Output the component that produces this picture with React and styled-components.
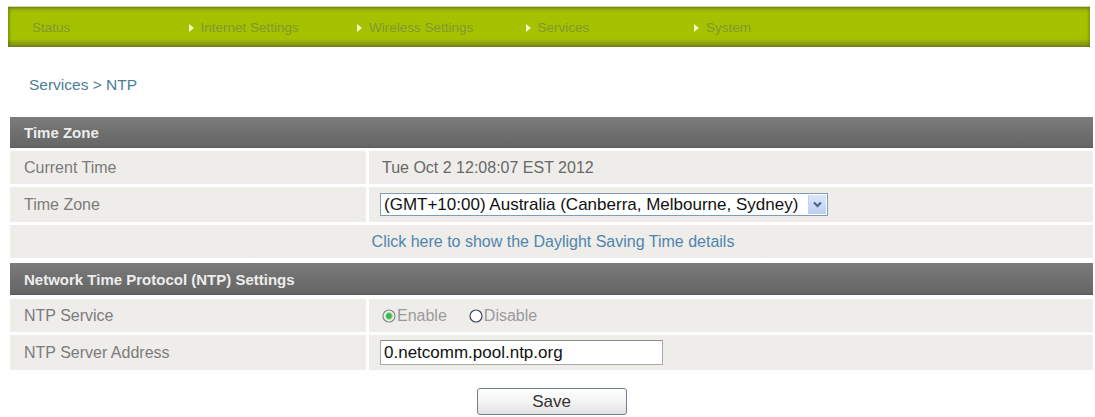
import React from 'react';
import styled, { createGlobalStyle } from 'styled-components';

const GlobalStyle = createGlobalStyle`
  body {
    margin: 0;
    background: #ffffff;
    font-family: "Liberation Sans", Arial, sans-serif;
  }
`;

const Page = styled.div`
  padding: 6px 5px 0 8px;
  width: 1095px;
  height: 417px;
  box-sizing: border-box;
  overflow: hidden;
`;

const NavBar = styled.nav`
  display: flex;
  align-items: center;
  height: 41px;
  width: 1082px;
  box-sizing: border-box;
  padding-left: 12px;
  border-top: 1px solid #d3d8a8;
  background: linear-gradient(
    to bottom,
    #7f8c26 0,
    #9bb408 3px,
    #a5c200 6px,
    #a5c200 calc(100% - 8px),
    #93a80e calc(100% - 5px),
    #76861c 100%
  );
  box-shadow: inset 2px 0 2px rgba(90, 100, 20, 0.45),
    inset -2px 0 2px rgba(90, 100, 20, 0.35);
`;

const NavItem = styled.div`
  display: flex;
  align-items: center;
  width: 168.5px;
  flex: 0 0 168.5px;
  font-size: 13.5px;
  color: #83982e;
  padding-top: 1px;
`;

const Arrow = styled.span`
  width: 0;
  height: 0;
  margin-right: 7px;
  border-top: 4px solid transparent;
  border-bottom: 4px solid transparent;
  border-left: 5px solid ${(p) => (p.$hidden ? 'transparent' : '#f2f6c4')};
`;

const Crumb = styled.div`
  padding: 29px 0 0 21px;
  height: 70px;
  box-sizing: border-box;
  font-size: 15.5px;
  color: #4b7d97;
`;

const Table = styled.div`
  display: flex;
  flex-direction: column;
  gap: 3px;
  margin-left: 2px;
  width: 1083px;
`;

const Header = styled.div`
  height: ${(p) => p.$h || 31}px;
  margin-top: ${(p) => p.$top || 0}px;
  margin-bottom: ${(p) => p.$bottom || 0}px;
  display: flex;
  align-items: center;
  padding-left: 14px;
  font-size: 15px;
  font-weight: bold;
  color: #ececec;
  background: linear-gradient(to bottom, #7c7c7c 0, #717171 40%, #676767 92%, #5c5c5c 100%);
`;

const Row = styled.div`
  display: grid;
  grid-template-columns: 356px 1fr;
  column-gap: 3px;
  height: ${(p) => p.$h || 33}px;
`;

const Cell = styled.div`
  display: flex;
  align-items: center;
  background: #efedea;
  font-size: 16px;
  color: ${(p) => (p.$label ? '#7b7b7b' : '#676767')};
  padding-left: ${(p) => (p.$label ? 14 : p.$input ? 11 : 13)}px;
`;

const WideCell = styled.div`
  grid-column: 1 / span 2;
  display: flex;
  align-items: center;
  justify-content: center;
  background: #efedea;
  font-size: 16px;
  color: #4f85ad;
  padding-left: 3px;
`;

const SelectBox = styled.div`
  display: flex;
  align-items: center;
  height: 23px;
  box-sizing: border-box;
  border: 1px solid #7f9db9;
  background: #ffffff;
  font-size: 17px;
  color: #111111;
  padding-left: 3px;
`;

const SelectArrow = styled.div`
  width: 17px;
  height: 19px;
  margin: 0 1px 0 10px;
  display: flex;
  align-items: center;
  justify-content: center;
  background: linear-gradient(to bottom, #dbe6fa, #bccff1);
  border-left: 1px solid #c6d4ef;
`;

const TextInput = styled.div`
  display: flex;
  align-items: center;
  width: 283px;
  height: 25px;
  box-sizing: border-box;
  border: 1px solid #a9a9a9;
  border-top-color: #8e8e8e;
  background: #ffffff;
  padding-left: 3px;
  font-size: 17px;
  color: #111111;
`;

const RadioGroup = styled.div`
  display: flex;
  align-items: center;
  color: #9a9a9a;
  font-size: 16px;
`;

const RadioLabel = styled.span`
  margin-left: 1px;
  margin-right: ${(p) => p.$gap || 0}px;
`;

const Actions = styled.div`
  display: flex;
  justify-content: center;
  width: 1083px;
  margin-left: 2px;
  padding-top: 18px;
`;

const SaveButton = styled.button`
  width: 150px;
  height: 27px;
  border: 1px solid #6f8090;
  border-radius: 3px;
  background: linear-gradient(to bottom, #fefefe 0, #f4f4f4 50%, #e2e2e2 100%);
  font-family: "Liberation Sans", Arial, sans-serif;
  font-size: 17px;
  color: #333333;
  padding: 0;
`;

const Radio = ({ checked }) => (
  <svg width="14" height="14" viewBox="0 0 14 14">
    <circle cx="7" cy="7" r="6" fill={checked ? '#f3f3f3' : '#ffffff'} stroke={checked ? '#7d8f86' : '#3c4a5a'} strokeWidth="1.2" />
    {checked && <circle cx="7" cy="7" r="3.4" fill="#3fb649" stroke="#a8e0ae" strokeWidth="1" />}
  </svg>
);

const Chevron = () => (
  <svg width="9" height="7" viewBox="0 0 9 7">
    <path d="M1 1.5 L4.5 5 L8 1.5" fill="none" stroke="#4a5f86" strokeWidth="2" />
  </svg>
);

const navItems = ['Status', 'Internet Settings', 'Wireless Settings', 'Services', 'System'];

export default function App() {
  return (
    <>
      <GlobalStyle />
      <Page>
        <NavBar>
          {navItems.map((item, i) => (
            <NavItem key={item}>
              <Arrow $hidden={i === 0} />
              {item}
            </NavItem>
          ))}
        </NavBar>

        <Crumb>Services &gt; NTP</Crumb>

        <Table>
          <Header>Time Zone</Header>
          <Row>
            <Cell $label>Current Time</Cell>
            <Cell>Tue Oct 2 12:08:07 EST 2012</Cell>
          </Row>
          <Row $h={35}>
            <Cell $label>Time Zone</Cell>
            <Cell $input>
              <SelectBox>
                (GMT+10:00) Australia (Canberra, Melbourne, Sydney)
                <SelectArrow>
                  <Chevron />
                </SelectArrow>
              </SelectBox>
            </Cell>
          </Row>
          <Row>
            <WideCell>Click here to show the Daylight Saving Time details</WideCell>
          </Row>
          <Header $h={32} $top={2} $bottom={1}>Network Time Protocol (NTP) Settings</Header>
          <Row>
            <Cell $label>NTP Service</Cell>
            <Cell>
              <RadioGroup>
                <Radio checked />
                <RadioLabel $gap={22}>Enable</RadioLabel>
                <Radio />
                <RadioLabel>Disable</RadioLabel>
              </RadioGroup>
            </Cell>
          </Row>
          <Row $h={35}>
            <Cell $label>NTP Server Address</Cell>
            <Cell $input>
              <TextInput>0.netcomm.pool.ntp.org</TextInput>
            </Cell>
          </Row>
        </Table>

        <Actions>
          <SaveButton>Save</SaveButton>
        </Actions>
      </Page>
    </>
  );
}
